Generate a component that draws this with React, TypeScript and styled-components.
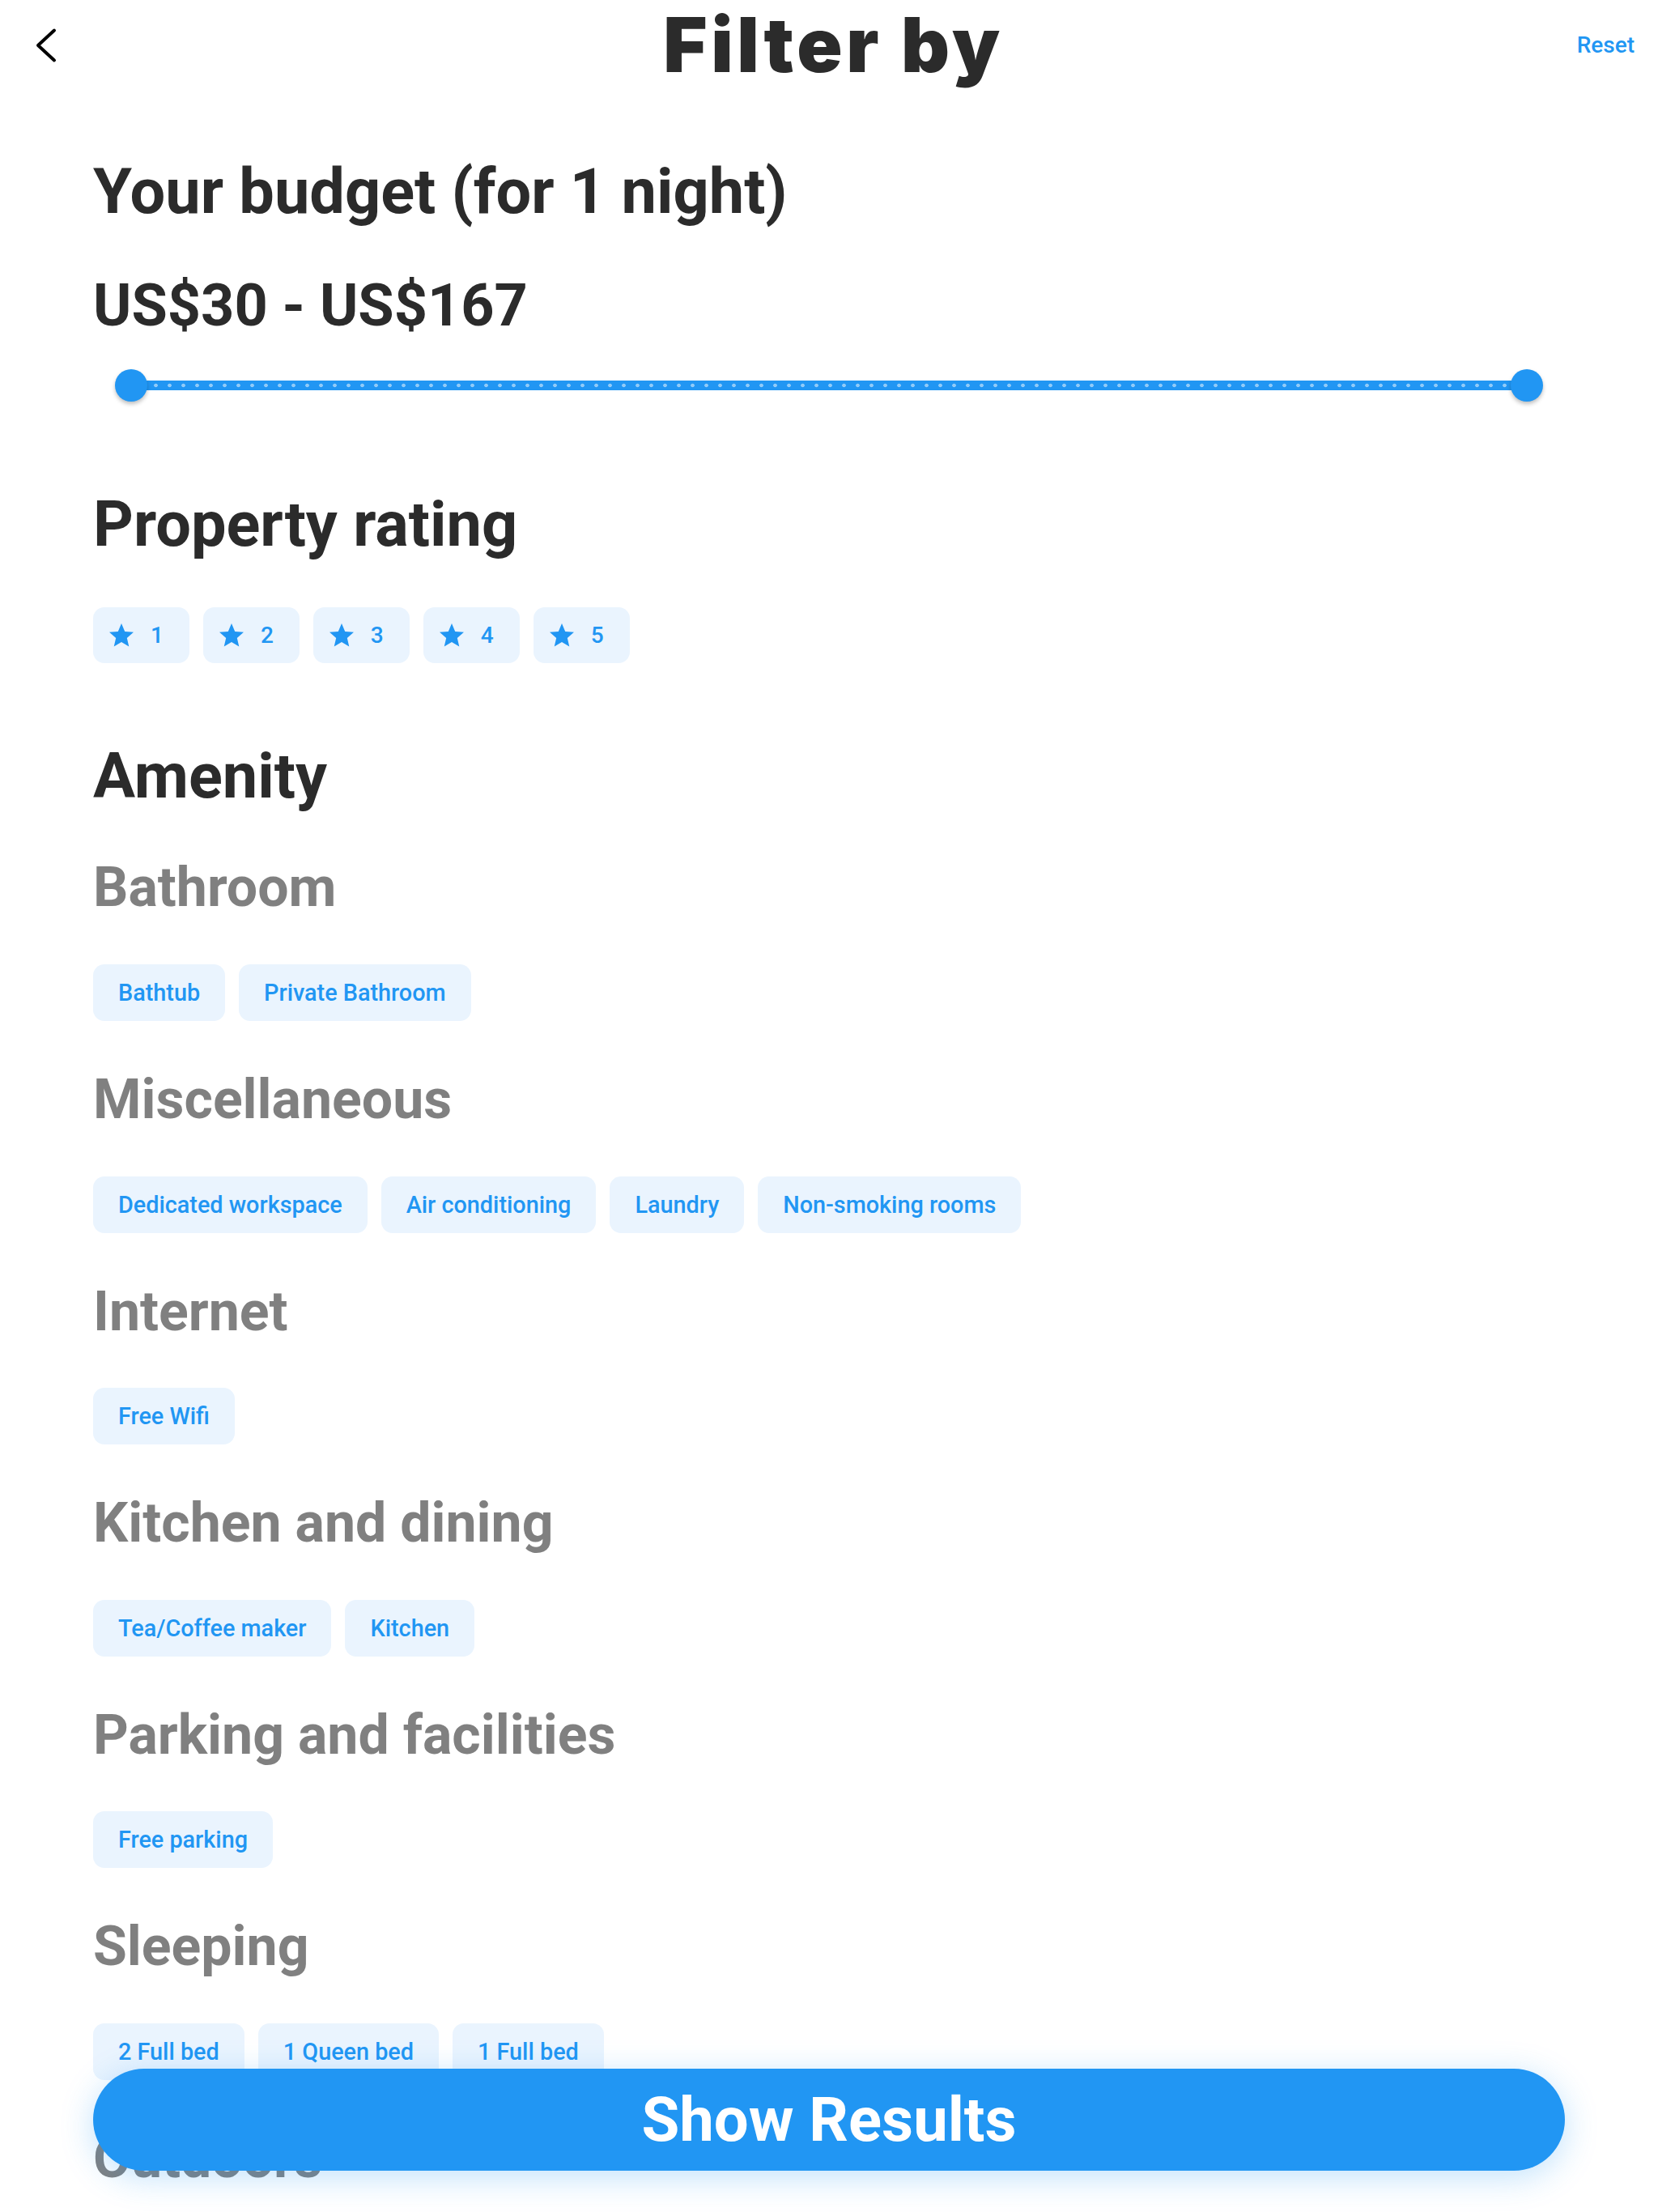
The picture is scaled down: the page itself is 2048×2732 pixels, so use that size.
import React from 'react';
import styled, { createGlobalStyle } from 'styled-components';

const BLUE = '#2196F3';

const GlobalStyle = createGlobalStyle`
  html, body {
    margin: 0;
    padding: 0;
    background: #ffffff;
  }
  body {
    font-family: Roboto, "Liberation Sans", sans-serif;
  }
`;

const Screen = styled.div`
  height: 100vh;
  overflow-y: auto;
  scrollbar-width: none;

  &::-webkit-scrollbar {
    display: none;
  }
`;

const Header = styled.header`
  display: grid;
  grid-template-columns: 1fr auto 1fr;
  align-items: center;
  height: 110px;
  padding: 0 29px 0 44px;
`;

const BackButton = styled.button`
  justify-self: start;
  display: flex;
  padding: 0;
  border: none;
  background: none;
  cursor: pointer;
`;

const Title = styled.h1`
  margin: 0 4px 0 0;
  font-family: Inter, "Liberation Sans", sans-serif;
  font-size: 93px;
  font-weight: 900;
  letter-spacing: 4.5px;
  line-height: 1.2;
  color: #2b2b2b;
`;

const ResetButton = styled.button`
  justify-self: end;
  padding: 0;
  border: none;
  background: none;
  font-family: Roboto, "Liberation Sans", sans-serif;
  font-size: 28px;
  font-weight: 500;
  color: ${BLUE};
  cursor: pointer;
`;

const Content = styled.main`
  padding: 0 115px 320px;
`;

const SectionTitle = styled.h2<{ $top: number }>`
  margin: ${(p) => p.$top}px 0 0;
  font-size: 77.5px;
  font-weight: 700;
  line-height: 1.2;
  color: #2b2b2b;
`;

const Price = styled.div`
  margin-top: 52px;
  font-size: 72px;
  font-weight: 700;
  line-height: 1.2;
  color: #2b2b2b;
`;

const Slider = styled.div`
  display: flex;
  align-items: center;
  height: 40px;
  margin-top: 35px;
  padding: 0 27px;
`;

const Thumb = styled.div`
  position: relative;
  z-index: 1;
  flex-shrink: 0;
  width: 40px;
  height: 40px;
  border-radius: 50%;
  background: ${BLUE};
  box-shadow: 0 3px 5px rgba(0, 0, 0, 0.25);
`;

const Track = styled.div`
  flex: 1;
  height: 12px;
  margin: 0 -4px;
  background:
    radial-gradient(circle, rgba(255, 255, 255, 0.5) 2px, transparent 2.6px) 6px 0 / 17px 12px repeat-x,
    ${BLUE};
`;

const ChipRow = styled.div<{ $top: number }>`
  display: flex;
  flex-wrap: wrap;
  gap: 17px;
  margin-top: ${(p) => p.$top}px;
`;

const Chip = styled.button`
  display: inline-flex;
  align-items: center;
  height: 70px;
  padding: 0 31px;
  border: none;
  border-radius: 14px;
  background: #eaf4fe;
  font-family: Roboto, "Liberation Sans", sans-serif;
  font-size: 28.8px;
  font-weight: 500;
  color: ${BLUE};
  cursor: pointer;
`;

const RatingChip = styled(Chip)`
  gap: 18px;
  height: 69px;
  padding: 0 32px 0 17px;
  font-size: 28px;
`;

const SubTitle = styled.h3<{ $top: number }>`
  margin: ${(p) => p.$top}px 0 0;
  font-size: 68px;
  font-weight: 700;
  line-height: 1.2;
  color: #808080;
`;

const ShowResults = styled.button`
  position: fixed;
  left: 115px;
  right: 115px;
  bottom: 51px;
  height: 126px;
  border: none;
  border-radius: 63px;
  background: ${BLUE};
  box-shadow: 0 8px 40px rgba(33, 150, 243, 0.28);
  font-family: Roboto, "Liberation Sans", sans-serif;
  font-size: 76px;
  font-weight: 700;
  color: #ffffff;
  cursor: pointer;
`;

const ChevronLeft = () => (
  <svg width="28" height="44" viewBox="0 0 28 44">
    <path d="M23 3.5 L3 22 L23 40.5" fill="none" stroke="#000" strokeWidth="4" strokeLinecap="round" strokeLinejoin="round" />
  </svg>
);

const StarIcon = () => (
  <svg width="36" height="36" viewBox="0 0 24 24">
    <path fill={BLUE} d="M12 17.27L18.18 21l-1.64-7.03L22 9.24l-7.19-.61L12 2 9.19 8.63 2 9.24l5.46 4.73L5.82 21z" />
  </svg>
);

const amenities: { name: string; items: string[] }[] = [
  { name: 'Bathroom', items: ['Bathtub', 'Private Bathroom'] },
  { name: 'Miscellaneous', items: ['Dedicated workspace', 'Air conditioning', 'Laundry', 'Non-smoking rooms'] },
  { name: 'Internet', items: ['Free Wifi'] },
  { name: 'Kitchen and dining', items: ['Tea/Coffee maker', 'Kitchen'] },
  { name: 'Parking and facilities', items: ['Free parking'] },
  { name: 'Sleeping', items: ['2 Full bed', '1 Queen bed', '1 Full bed'] },
  { name: 'Outdoors', items: ['Balcony', 'Garden'] },
];

const App: React.FC = () => {
  return (
    <>
      <GlobalStyle />
      <Screen>
        <Header>
          <BackButton aria-label="Back">
            <ChevronLeft />
          </BackButton>
          <Title>Filter by</Title>
          <ResetButton>Reset</ResetButton>
        </Header>

        <Content>
          <SectionTitle $top={80}>Your budget (for 1 night)</SectionTitle>
          <Price>US$30 - US$167</Price>
          <Slider>
            <Thumb />
            <Track />
            <Thumb />
          </Slider>

          <SectionTitle $top={105}>Property rating</SectionTitle>
          <ChipRow $top={56}>
            {[1, 2, 3, 4, 5].map((n) => (
              <RatingChip key={n}>
                <StarIcon />
                {n}
              </RatingChip>
            ))}
          </ChipRow>

          <SectionTitle $top={93}>Amenity</SectionTitle>
          {amenities.map((group, i) => (
            <React.Fragment key={group.name}>
              <SubTitle $top={i === 0 ? 51 : 57}>{group.name}</SubTitle>
              <ChipRow $top={53}>
                {group.items.map((item) => (
                  <Chip key={item}>{item}</Chip>
                ))}
              </ChipRow>
            </React.Fragment>
          ))}
        </Content>

        <ShowResults>Show Results</ShowResults>
      </Screen>
    </>
  );
};

export default App;
